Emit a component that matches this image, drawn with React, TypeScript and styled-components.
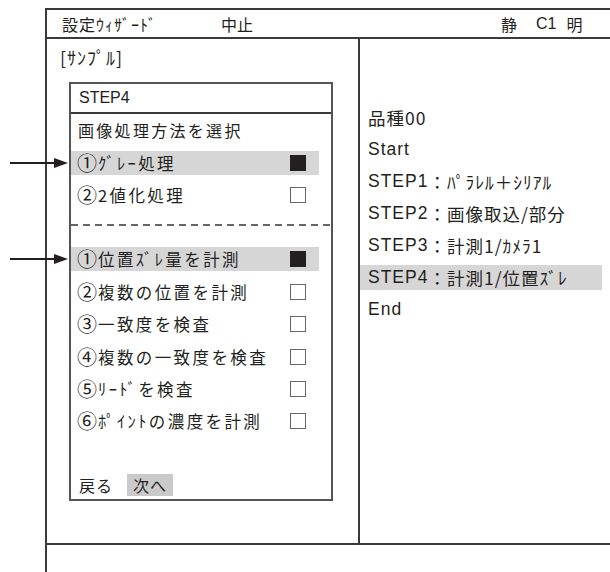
import styled, { createGlobalStyle } from "styled-components";

const GlobalStyle = createGlobalStyle`
  html, body {
    margin: 0;
    background: #ffffff;
  }
  body {
    font-family: "Liberation Sans", "Noto Sans CJK JP", sans-serif;
    color: #231f20;
  }
`;

const Page = styled.div`
  position: relative;
  width: 610px;
  height: 572px;
  overflow: hidden;
  box-sizing: border-box;
  padding: 8px 0 0 45px;
`;

const Frame = styled.div`
  height: 100%;
  border-top: 2px solid #3a3a3a;
  border-left: 2px solid #3a3a3a;
  display: flex;
  flex-direction: column;
`;

const Header = styled.div`
  height: 27px;
  border-bottom: 2px solid #3a3a3a;
  display: flex;
  align-items: center;
  padding-left: 15px;
  font-size: 16px;
`;

const HeaderItem = styled.span<{
  $gap?: number;
  $latin?: boolean;
  $spacing?: number;
}>`
  margin-left: ${(p) => p.$gap ?? 0}px;
  letter-spacing: ${(p) => p.$spacing ?? 0}px;
  white-space: nowrap;
  font-family: ${(p) =>
    p.$latin
      ? `"Liberation Sans", sans-serif`
      : `"Noto Sans CJK JP", sans-serif`};
`;

const Main = styled.div`
  height: 506px;
  display: grid;
  grid-template-columns: 313px 1fr;
  border-bottom: 2px solid #3a3a3a;
  box-sizing: border-box;
`;

const LeftPanel = styled.div`
  border-right: 2px solid #3a3a3a;
  padding: 7px 0 0 13px;
`;

const Caption = styled.div`
  font-family: "Noto Sans CJK JP", sans-serif;
  font-size: 18px;
  letter-spacing: 1px;
  height: 22px;
  line-height: 22px;
`;

const WizardBox = styled.div`
  margin: 14px 0 0 9px;
  width: 264px;
  height: 419px;
  box-sizing: border-box;
  border: 2px solid #555;
  display: flex;
  flex-direction: column;
`;

const BoxTitle = styled.div`
  height: 28px;
  line-height: 28px;
  padding-left: 8px;
  font-size: 16px;
  border-bottom: 2px solid #3a3a3a;
`;

const Prompt = styled.div`
  margin-top: 4px;
  height: 24px;
  line-height: 24px;
  padding-left: 7px;
  font-family: "Noto Sans CJK JP", sans-serif;
  font-size: 16px;
  letter-spacing: 2.3px;
`;

const Group = styled.div<{ $top: number }>`
  margin-top: ${(p) => p.$top}px;
  display: flex;
  flex-direction: column;
  gap: 8.4px;
`;

const Row = styled.div<{ $active?: boolean }>`
  position: relative;
  height: 24px;
  margin-right: 12px;
  padding-left: 6px;
  display: flex;
  align-items: center;
  font-family: "Noto Sans CJK JP", sans-serif;
  font-size: 16.5px;
  letter-spacing: 2.4px;
  white-space: nowrap;
  background: ${(p) => (p.$active ? "#d6d6d6" : "transparent")};
`;

const Num = styled.span`
  font-size: 20px;
  line-height: 20px;
  letter-spacing: 0;
  margin-right: 1px;
`;

const Check = styled.span<{ $on?: boolean }>`
  margin-left: auto;
  margin-right: 13px;
  width: 16px;
  height: 16px;
  box-sizing: border-box;
  border: 1.5px solid ${(p) => (p.$on ? "#231f20" : "#666")};
  background: ${(p) => (p.$on ? "#231f20" : "#fff")};
  flex-shrink: 0;
`;

const Dashed = styled.div`
  margin-top: 17px;
  height: 2px;
  background: repeating-linear-gradient(
    to right,
    #666 0 7px,
    transparent 7px 12px
  );
`;

const Pointer = styled.svg`
  position: absolute;
  left: -61px;
  top: 6px;
`;

const Footer = styled.div`
  margin-top: auto;
  margin-bottom: 3px;
  padding-left: 6px;
  display: flex;
  align-items: center;
  gap: 8px;
  font-family: "Noto Sans CJK JP", sans-serif;
  font-size: 16px;
`;

const FooterButton = styled.span<{ $active?: boolean }>`
  height: 22px;
  line-height: 22px;
  padding: 0 6px 0 ${(p) => (p.$active ? 6 : 2)}px;
  letter-spacing: 1px;
  background: ${(p) => (p.$active ? "#cacaca" : "transparent")};
`;

const RightPanel = styled.div`
  padding-top: 66px;
  display: flex;
  flex-direction: column;
  gap: 7px;
`;

const FlowItem = styled.div<{ $active?: boolean }>`
  height: 25px;
  margin-right: 8px;
  padding-left: 8px;
  display: flex;
  align-items: center;
  white-space: nowrap;
  font-size: 17.5px;
  letter-spacing: 1px;
  background: ${(p) => (p.$active ? "#d6d6d6" : "transparent")};
`;

const FlowCode = styled.span`
  font-family: "Liberation Sans", sans-serif;
`;

const FlowText = styled.span`
  font-family: "Noto Sans CJK JP", sans-serif;
`;

const Arrow = () => (
  <Pointer width="58" height="12" viewBox="0 0 58 12">
    <line x1="0" y1="6" x2="46" y2="6" stroke="#231f20" strokeWidth="2" />
    <polygon points="44,1 58,6 44,11" fill="#231f20" />
  </Pointer>
);

type Choice = { num: string; label: string; on: boolean };

const grayItems: Choice[] = [
  { num: "①", label: "ｸﾞﾚｰ処理", on: true },
  { num: "②", label: "2値化処理", on: false },
];

const measureItems: Choice[] = [
  { num: "①", label: "位置ｽﾞﾚ量を計測", on: true },
  { num: "②", label: "複数の位置を計測", on: false },
  { num: "③", label: "一致度を検査", on: false },
  { num: "④", label: "複数の一致度を検査", on: false },
  { num: "⑤", label: "ﾘｰﾄﾞを検査", on: false },
  { num: "⑥", label: "ﾎﾟｲﾝﾄの濃度を計測", on: false },
];

const flow = [
  { code: "", text: "品種00" },
  { code: "Start", text: "" },
  { code: "STEP1", text: "：ﾊﾟﾗﾚﾙ＋ｼﾘｱﾙ" },
  { code: "STEP2", text: "：画像取込/部分" },
  { code: "STEP3", text: "：計測1/ｶﾒﾗ1" },
  { code: "STEP4", text: "：計測1/位置ｽﾞﾚ" },
  { code: "End", text: "" },
];

const ChoiceRow = ({ item }: { item: Choice }) => (
  <Row $active={item.on}>
    {item.on && <Arrow />}
    <Num>{item.num}</Num>
    {item.label}
    <Check $on={item.on} />
  </Row>
);

const App = () => {
  return (
    <>
      <GlobalStyle />
      <Page>
        <Frame>
          <Header>
            <HeaderItem $spacing={1}>設定ｳｨｻﾞｰﾄﾞ</HeaderItem>
            <HeaderItem $gap={64}>中止</HeaderItem>
            <HeaderItem $gap={248}>静</HeaderItem>
            <HeaderItem $gap={19} $latin>
              C1
            </HeaderItem>
            <HeaderItem $gap={10}>明</HeaderItem>
          </Header>
          <Main>
            <LeftPanel>
              <Caption>[ｻﾝﾌﾟﾙ]</Caption>
              <WizardBox>
                <BoxTitle>STEP4</BoxTitle>
                <Prompt>画像処理方法を選択</Prompt>
                <Group $top={9}>
                  {grayItems.map((item) => (
                    <ChoiceRow key={item.num + item.label} item={item} />
                  ))}
                </Group>
                <Dashed />
                <Group $top={21}>
                  {measureItems.map((item) => (
                    <ChoiceRow key={item.num + item.label} item={item} />
                  ))}
                </Group>
                <Footer>
                  <FooterButton>戻る</FooterButton>
                  <FooterButton $active>次へ</FooterButton>
                </Footer>
              </WizardBox>
            </LeftPanel>
            <RightPanel>
              {flow.map((step) => (
                <FlowItem
                  key={step.code + step.text}
                  $active={step.code === "STEP4"}
                >
                  {step.code && <FlowCode>{step.code}</FlowCode>}
                  {step.text && <FlowText>{step.text}</FlowText>}
                </FlowItem>
              ))}
            </RightPanel>
          </Main>
        </Frame>
      </Page>
    </>
  );
};

export default App;
